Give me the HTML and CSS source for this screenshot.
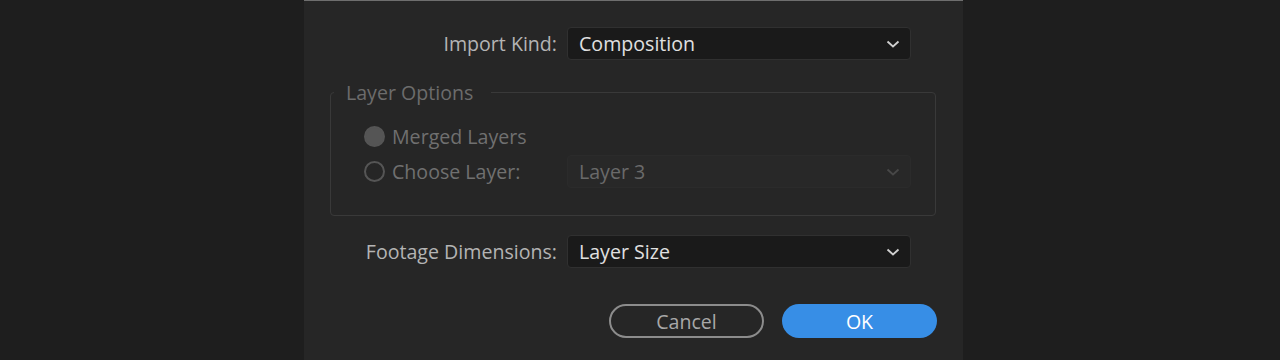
FILE: index.html
```html
<!DOCTYPE html>
<html lang="en">
<head>
    <meta charset="UTF-8">
    <title>Import Options</title>
    <link rel="stylesheet" href="styles.css">
</head>
<body>

    <!-- Import dialog -->
    <div class="dialog">
        <div class="row row-kind">
            <label class="label">Import Kind:</label>
            <div class="select">
                <span>Composition</span>
                <svg class="chevron" width="14" height="8" viewBox="0 0 14 8"><path d="M1.5 1.5 L7 6.5 L12.5 1.5" fill="none" stroke="currentColor" stroke-width="1.8"/></svg>
            </div>
        </div>

        <fieldset class="options">
            <legend>Layer Options</legend>
            <div class="radio-row">
                <span class="radio filled"></span>
                <span class="radio-text">Merged Layers</span>
            </div>
            <div class="radio-row">
                <span class="radio"></span>
                <span class="radio-text choose">Choose Layer:</span>
                <div class="select disabled">
                    <span>Layer 3</span>
                    <svg class="chevron" width="14" height="8" viewBox="0 0 14 8"><path d="M1.5 1.5 L7 6.5 L12.5 1.5" fill="none" stroke="currentColor" stroke-width="1.8"/></svg>
                </div>
            </div>
        </fieldset>

        <div class="row row-footage">
            <label class="label">Footage Dimensions:</label>
            <div class="select">
                <span>Layer Size</span>
                <svg class="chevron" width="14" height="8" viewBox="0 0 14 8"><path d="M1.5 1.5 L7 6.5 L12.5 1.5" fill="none" stroke="currentColor" stroke-width="1.8"/></svg>
            </div>
        </div>

        <div class="buttons">
            <button class="btn btn-cancel">Cancel</button>
            <button class="btn btn-ok">OK</button>
        </div>
    </div>

</body>
</html>
```

FILE: styles.css
```css
/* General */
body {
    margin: 0;
    padding: 0;
    background-color: #1e1e1e;
    font-family: "Open Sans", "Liberation Sans", sans-serif;
    font-size: 19.6px;
    color: #b8b8b8;
    height: 360px;
    overflow: hidden;
}
.dialog {
    margin-left: 304px;
    width: 659px;
    height: 360px;
    box-sizing: border-box;
    background-color: #262626;
    border-top: 1px solid #6e6e6e;
}
.row {
    display: flex;
    align-items: center;
    gap: 10px;
}
.row-kind {
    padding-top: 26px;
}
.row-footage {
    margin-top: 19px;
}
.label {
    width: 253px;
    text-align: right;
    color: #b4b4b4;
}
.select {
    width: 344px;
    height: 33px;
    box-sizing: border-box;
    display: flex;
    align-items: center;
    justify-content: space-between;
    padding: 0 10px 0 11px;
    background-color: #1a1a1a;
    border: 1px solid #303030;
    border-radius: 4px;
    color: #e0e0e0;
    font-size: 19.6px;
}
.select .chevron {
    color: #d0d0d0;
}
.select.disabled {
    background-color: #282828;
    border-color: #2b2b2b;
    color: #6a6a6a;
}
.select.disabled .chevron {
    color: #484848;
}
/* Layer options group */
.options {
    margin: 19px 0 0 26px;
    width: 606px;
    height: 137px;
    box-sizing: border-box;
    padding: 13px 0 0 33px;
    border: 1px solid #393939;
    border-radius: 4px;
}
.options legend {
    margin-left: -30px;
    padding: 0 18px 0 12px;
    color: #6c6c6c;
    font-size: 19.6px;
}
.radio-row {
    display: flex;
    align-items: center;
    height: 35px;
}
.radio {
    width: 21px;
    height: 21px;
    box-sizing: border-box;
    border-radius: 50%;
    border: 2px solid #555;
    margin-right: 7px;
}
.radio.filled {
    background-color: #555;
}
.radio-text {
    color: #707070;
    font-size: 19.6px;
}
.radio-text.choose {
    width: 175px;
}
/* Buttons */
.buttons {
    display: flex;
    justify-content: flex-end;
    gap: 18px;
    margin-top: 36px;
    padding-right: 26px;
}
.btn {
    width: 155px;
    height: 34px;
    border-radius: 17px;
    font-family: "Open Sans", "Liberation Sans", sans-serif;
    font-size: 19.6px;
    cursor: pointer;
}
.btn-cancel {
    background-color: transparent;
    border: 2px solid #8c8c8c;
    color: #a8a8a8;
}
.btn-ok {
    background-color: #378ee6;
    border: none;
    color: #fff;
}
```
